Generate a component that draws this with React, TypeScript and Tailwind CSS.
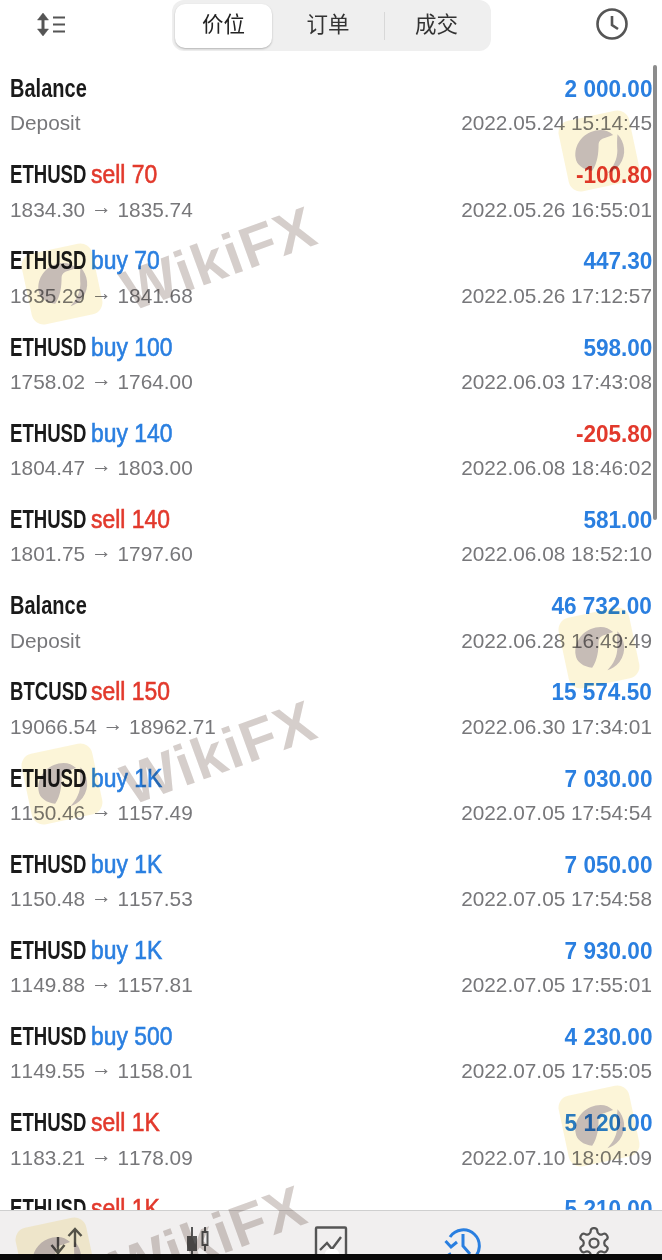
import React from "react";

// Trade history rows
interface Deal {
  symbol: string;
  side?: string;
  sideColor?: string;
  amount: string;
  amountColor: string;
  detail?: string;
  time?: string;
}

const BLUE = "text-[#2a7fe0]";
const RED = "text-[#e2392c]";

const deals: Deal[] = [
  { symbol: "Balance", amount: "2 000.00", amountColor: BLUE, detail: "Deposit", time: "2022.05.24 15:14:45" },
  { symbol: "ETHUSD", side: "sell 70", sideColor: RED, amount: "-100.80", amountColor: RED, detail: "1834.30 → 1835.74", time: "2022.05.26 16:55:01" },
  { symbol: "ETHUSD", side: "buy 70", sideColor: BLUE, amount: "447.30", amountColor: BLUE, detail: "1835.29 → 1841.68", time: "2022.05.26 17:12:57" },
  { symbol: "ETHUSD", side: "buy 100", sideColor: BLUE, amount: "598.00", amountColor: BLUE, detail: "1758.02 → 1764.00", time: "2022.06.03 17:43:08" },
  { symbol: "ETHUSD", side: "buy 140", sideColor: BLUE, amount: "-205.80", amountColor: RED, detail: "1804.47 → 1803.00", time: "2022.06.08 18:46:02" },
  { symbol: "ETHUSD", side: "sell 140", sideColor: RED, amount: "581.00", amountColor: BLUE, detail: "1801.75 → 1797.60", time: "2022.06.08 18:52:10" },
  { symbol: "Balance", amount: "46 732.00", amountColor: BLUE, detail: "Deposit", time: "2022.06.28 16:49:49" },
  { symbol: "BTCUSD", side: "sell 150", sideColor: RED, amount: "15 574.50", amountColor: BLUE, detail: "19066.54 → 18962.71", time: "2022.06.30 17:34:01" },
  { symbol: "ETHUSD", side: "buy 1K", sideColor: BLUE, amount: "7 030.00", amountColor: BLUE, detail: "1150.46 → 1157.49", time: "2022.07.05 17:54:54" },
  { symbol: "ETHUSD", side: "buy 1K", sideColor: BLUE, amount: "7 050.00", amountColor: BLUE, detail: "1150.48 → 1157.53", time: "2022.07.05 17:54:58" },
  { symbol: "ETHUSD", side: "buy 1K", sideColor: BLUE, amount: "7 930.00", amountColor: BLUE, detail: "1149.88 → 1157.81", time: "2022.07.05 17:55:01" },
  { symbol: "ETHUSD", side: "buy 500", sideColor: BLUE, amount: "4 230.00", amountColor: BLUE, detail: "1149.55 → 1158.01", time: "2022.07.05 17:55:05" },
  { symbol: "ETHUSD", side: "sell 1K", sideColor: RED, amount: "5 120.00", amountColor: BLUE, detail: "1183.21 → 1178.09", time: "2022.07.10 18:04:09" },
  // only the top line of this one is visible above the tab bar
  { symbol: "ETHUSD", side: "sell 1K", sideColor: RED, amount: "5 210.00", amountColor: BLUE },
];

function DealRow({ deal }: { deal: Deal }) {
  // the arrow glyph sits low in Liberation, so lift it up a bit
  const [from, to] = (deal.detail ?? "").split(" → ");
  return (
    <div className="h-[86.2px] shrink-0 px-[10px]">
      <div className="flex items-center justify-between h-[33px]">
        <div className="flex items-center whitespace-nowrap text-[26px] leading-[33px]">
          <div className="w-[81px] shrink-0">
            <div className={`font-bold text-[#1a1a1a] origin-left ${deal.symbol === "Balance" ? "scale-x-[0.77]" : "scale-x-[0.715]"}`}>
              {deal.symbol}
            </div>
          </div>
          {deal.side && (
            <div className={`${deal.sideColor} scale-x-[0.88] origin-left [-webkit-text-stroke:0.6px_currentColor]`}>
              {deal.side}
            </div>
          )}
        </div>
        <div className={`${deal.amountColor} text-[24px] leading-[33px] font-bold scale-x-[0.94] origin-right whitespace-nowrap`}>
          {deal.amount}
        </div>
      </div>
      {deal.detail && (
        <div className="flex items-center justify-between h-[36px] text-[20.8px] text-[#77777a] [font-kerning:none]">
          <span>
            {from}
            {to && (
              <>
                {" "}
                <span className="inline-block -translate-y-[3px]">→</span> {to}
              </>
            )}
          </span>
          <span>{deal.time}</span>
        </div>
      )}
    </div>
  );
}

function Eagle() {
  return (
    <svg viewBox="0 0 80 80" className="w-full h-full" fill="none">
      <path d="M13 42c1-14 13-25 28-25 8 0 14 3 18 9l-9 1c-5 0-8 2-9 6-2 9-5 19-13 27-9-3-16-10-15-18z" fill="#c6bcb6" />
      <path d="M64 26c6 10 6 24-5 34-5 4-10 6-15 6 8-5 14-13 16-22 1-6 2-12 4-18z" fill="#c6bcb6" />
    </svg>
  );
}

// Semi transparent brand stamp laid over the screenshot
function Watermark({ tile, text }: { tile: string; text?: string }) {
  return (
    <>
      <div className={`absolute ${tile} w-[72px] h-[72px] rounded-[12px] bg-[#f9ecb8]/55 -rotate-[12deg] mix-blend-multiply`}>
        <Eagle />
      </div>
      {text && (
        <div className={`absolute ${text} w-[205px] text-[58px] leading-none font-bold text-[#b9aea8]/60 -rotate-[20deg] tracking-[1.5px] whitespace-nowrap mix-blend-multiply`}>
          WikiFX
        </div>
      )}
    </>
  );
}

function TabBar() {
  return (
    <div className="h-[44px] shrink-0 bg-[#f1efef] border-t border-[#cfcfcf] overflow-hidden flex relative">
      <div className="w-[132px] pl-[49px] pt-[16px]">
        <svg width="36" height="30" viewBox="0 0 36 30" fill="none" stroke="#555" strokeWidth="2.4">
          <path d="M9 10v20M2.5 18L9 26l6.5-8" />
          <path d="M26 20V2M19.5 9L26 2l6.5 7" />
        </svg>
      </div>
      <div className="w-[132px] pl-[54px] pt-[16px]">
        <svg width="24" height="30" viewBox="0 0 24 30" fill="none" stroke="#555" strokeWidth="2">
          <path d="M6 0v30M19 0v24" />
          <rect x="2" y="10" width="8" height="13" fill="#555" />
          <rect x="16.5" y="5" width="5" height="13" fill="#f1efef" />
        </svg>
      </div>
      <div className="w-[132px] pl-[50px] pt-[15px]">
        <svg width="34" height="30" viewBox="0 0 34 30" fill="none" stroke="#555" strokeWidth="2.4">
          <rect x="2" y="1.5" width="30" height="38" rx="1" />
          <path d="M6 24l7-7 5 6 9-12" />
        </svg>
      </div>
      <div className="w-[132px] pl-[48px] pt-[14px]">
        <svg width="38" height="30" viewBox="0 0 38 38" fill="none" stroke="#2a7fe0" strokeWidth="3" className="h-[38px]">
          <path d="M6 12a16 16 0 1 1-1 16" />
          <path d="M1.5 16l5.5 6 6-5" />
          <path d="M19 9v12l7 8" />
        </svg>
      </div>
      <div className="w-[134px] pl-[48px] pt-[14px]">
        <svg width="36" height="36" viewBox="0 0 24 24" fill="none" stroke="#555" strokeWidth="1.5">
          <path d="M12.22 2h-.44a2 2 0 0 0-2 2v.18a2 2 0 0 1-1 1.73l-.43.25a2 2 0 0 1-2 0l-.15-.08a2 2 0 0 0-2.73.73l-.22.38a2 2 0 0 0 .73 2.73l.15.1a2 2 0 0 1 1 1.72v.51a2 2 0 0 1-1 1.74l-.15.09a2 2 0 0 0-.73 2.73l.22.38a2 2 0 0 0 2.73.73l.15-.08a2 2 0 0 1 2 0l.43.25a2 2 0 0 1 1 1.73V20a2 2 0 0 0 2 2h.44a2 2 0 0 0 2-2v-.18a2 2 0 0 1 1-1.73l.43-.25a2 2 0 0 1 2 0l.15.08a2 2 0 0 0 2.73-.73l.22-.39a2 2 0 0 0-.73-2.73l-.15-.08a2 2 0 0 1-1-1.74v-.5a2 2 0 0 1 1-1.74l.15-.09a2 2 0 0 0 .73-2.73l-.22-.38a2 2 0 0 0-2.73-.73l-.15.08a2 2 0 0 1-2 0l-.43-.25a2 2 0 0 1-1-1.73V4a2 2 0 0 0-2-2z" />
          <circle cx="12" cy="12" r="3" />
        </svg>
      </div>
      {/* home indicator peeking out under the icons */}
      <div className="absolute left-[325px] bottom-0 w-[14px] h-[5px] rounded-t-full bg-white" />
    </div>
  );
}

export default function App() {
  return (
    <div className="relative flex flex-col w-[662px] h-[1260px] bg-white overflow-hidden blur-[0.5px] font-['Liberation_Sans','Noto_Sans_CJK_SC',sans-serif]">
      {/* Header */}
      <div className="h-[72px] shrink-0 flex items-start">
        <div className="w-[172px] pl-[37px] pt-[12px]">
          <svg width="29" height="25" viewBox="0 0 29 25" fill="none" stroke="#555" strokeWidth="3">
            <path d="M6 3v19" />
            <path d="M0.5 8L6 1l5.5 7zM0.5 17L6 24l5.5-7z" fill="#555" strokeWidth="0.5" />
            <path d="M16 5.5h12M16 12.5h12M16 19.5h12" strokeWidth="2.2" />
          </svg>
        </div>
        <div className="w-[319px] h-[51px] rounded-[12px] bg-[#efefef] flex items-center p-[3px] text-[21.5px] text-[#333]">
          <div className="w-[97px] h-[44px] bg-white rounded-[10px] shadow-[0_1px_2px_rgba(0,0,0,0.25)] flex items-center justify-center text-[#222]">价位</div>
          <div className="w-[112px] flex items-center justify-center">订单</div>
          <div className="w-px h-[28px] bg-[#d8d8d8]" />
          <div className="w-[103px] flex items-center justify-center">成交</div>
        </div>
        <div className="flex-1 flex justify-end pr-[33px] pt-[7px]">
          <svg width="34" height="34" viewBox="0 0 34 34" fill="none" stroke="#555" strokeWidth="2.6">
            <circle cx="17" cy="17" r="14.5" />
            <path d="M17 9v9l6 4" />
          </svg>
        </div>
      </div>

      {/* Deal list */}
      <div className="h-[1138px] shrink-0 flex flex-col overflow-hidden">
        {deals.map((deal, i) => (
          <DealRow key={i} deal={deal} />
        ))}
      </div>

      <TabBar />

      {/* Black strip at the bottom of the capture */}
      <div className="h-[6px] shrink-0 bg-[#0a0a0a]" />

      {/* Scroll indicator */}
      <div className="absolute left-[653px] top-[65px] w-[4px] h-[455px] rounded-full bg-[#8c8c8c]" />

      <Watermark tile="left-[26px] top-[248px]" text="left-[118px] top-[229px]" />
      <Watermark tile="left-[563px] top-[115px]" />
      <Watermark tile="left-[563px] top-[612px]" />
      <Watermark tile="left-[26px] top-[748px]" text="left-[118px] top-[723px]" />
      <Watermark tile="left-[563px] top-[1090px]" />
      <Watermark tile="left-[20px] top-[1222px]" text="left-[108px] top-[1208px]" />
    </div>
  );
}
